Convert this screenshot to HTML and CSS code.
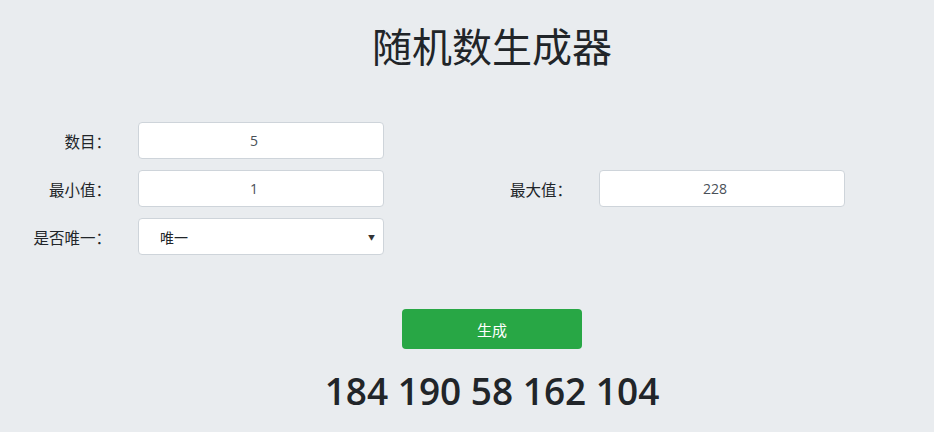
FILE: index.html
```html
<!DOCTYPE html>
<html lang="zh">
<head>
<meta charset="utf-8">
<link rel="stylesheet" href="styles.css">
</head>
<body>
<div class="page">
  <h1 class="title shifted">随机数生成器</h1>
  <form class="form">
    <label class="label">数目：</label>
    <input class="field" type="text" value="5">
    <span class="empty"></span>
    <span class="empty"></span>
    <label class="label">最小值：</label>
    <input class="field" type="text" value="1">
    <label class="label">最大值：</label>
    <input class="field" type="text" value="228">
    <label class="label">是否唯一：</label>
    <div class="select">
      <span class="select-text">唯一</span>
      <span class="caret">▼</span>
    </div>
  </form>
  <div class="actions shifted">
    <button class="btn" type="button">生成</button>
  </div>
  <div class="result shifted">184 190 58 162 104</div>
</div>
</body>
</html>
```

FILE: styles.css
```css
html, body {
  margin: 0;
  padding: 0;
  overflow: hidden;
  background: #e9ecef;
}
body {
  font-family: "Noto Sans CJK SC", "Noto Sans", sans-serif;
  color: #212529;
}
.page {
  width: 934px;
}
.shifted {
  padding-left: 50px;
}
.title {
  margin: 17px 0 0;
  font-size: 40px;
  font-weight: 400;
  line-height: 56px;
  text-align: center;
}
.form {
  display: grid;
  grid-template-columns: 110px 246px 159px 246px;
  column-gap: 28px;
  row-gap: 11px;
  margin-top: 49px;
  align-items: center;
}
.label {
  text-align: right;
  font-size: 15.5px;
  color: #212529;
  white-space: nowrap;
  margin-right: -1px;
}
.field {
  box-sizing: border-box;
  height: 37px;
  width: 246px;
  border: 1px solid #ced4da;
  border-radius: 4px;
  background: #fff;
  text-align: center;
  font-family: "Open Sans", "Noto Sans", sans-serif;
  font-size: 14px;
  color: #495057;
  padding: 0 26px 0 12px;
  margin: 0;
}
.select {
  box-sizing: border-box;
  height: 37px;
  width: 246px;
  border: 1px solid #ced4da;
  border-radius: 4px;
  background: #fff;
  display: flex;
  align-items: center;
  justify-content: space-between;
  padding: 0 8px 0 21px;
  font-size: 14px;
  color: #212529;
}
.caret {
  font-size: 7px;
  color: #333;
}
.actions {
  display: flex;
  justify-content: center;
  margin-top: 54px;
}
.btn {
  width: 180px;
  height: 40px;
  border: none;
  border-radius: 4px;
  background: #28a745;
  color: #fff;
  font-family: "Noto Sans CJK SC", sans-serif;
  font-size: 15px;
  padding: 0;
}
.result {
  margin-top: 17px;
  text-align: center;
  font-family: "Open Sans", "Noto Sans", sans-serif;
  font-weight: 600;
  font-size: 37px;
  line-height: 50px;
  color: #212529;
}
```
